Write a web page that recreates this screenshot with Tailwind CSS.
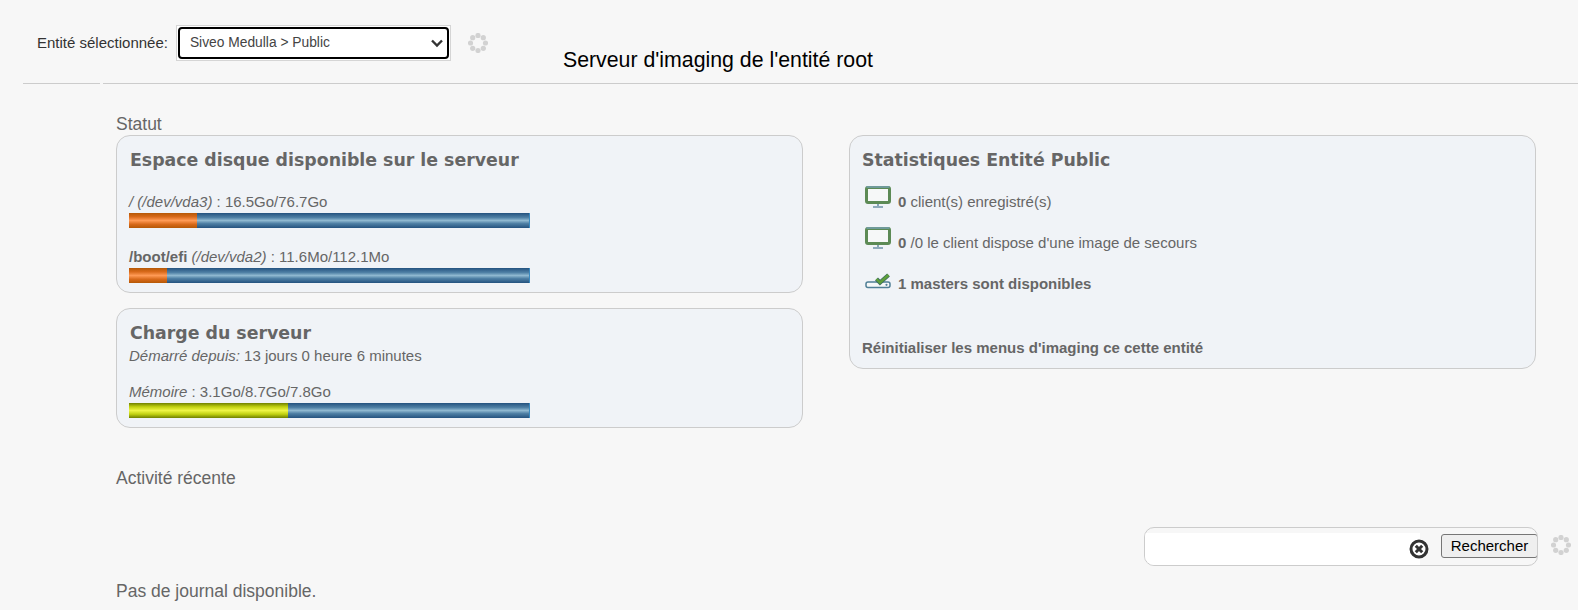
<!DOCTYPE html>
<html lang="fr">
<head>
    <meta charset="UTF-8">
    <title>Imaging</title>
    <script src="https://cdn.jsdelivr.net/npm/@tailwindcss/browser@4"></script>
</head>
<body class="bg-[#f7f7f7] h-[610px] overflow-hidden font-['Liberation_Sans',Arial,sans-serif] text-[#666]">

    <!-- entity selector + title -->
    <div class="flex h-[83px]">
        <div class="flex items-start pl-[37px] pt-[25px]">
            <label class="text-[15px] text-[#333] leading-[36px] mr-[8px]">Entité sélectionnée:</label>
            <div class="w-[275px] h-[36px] border border-[#d5d5d5] bg-white p-[1px]">
                <div class="h-full border-2 border-black rounded-[4px] flex items-center justify-between pl-[10px] pr-[3px]">
                    <span class="text-[13.8px] text-[#444]">Siveo Medulla &gt; Public</span>
                    <svg width="14" height="10" viewBox="0 0 14 10"><path d="M2 2.5 L7 7.5 L12 2.5" fill="none" stroke="#333" stroke-width="2.4"/></svg>
                </div>
            </div>
            <svg class="ml-[17px] mt-[8px]" width="20" height="20" viewBox="0 0 20 20" fill="#d2d2d2">
                <circle cx="10" cy="2.5" r="2.6"/><circle cx="15.3" cy="4.7" r="2.6"/><circle cx="17.5" cy="10" r="2.6"/><circle cx="15.3" cy="15.3" r="2.6"/><circle cx="10" cy="17.5" r="2.6"/><circle cx="4.7" cy="15.3" r="2.6"/><circle cx="2.5" cy="10" r="2.6"/><circle cx="4.7" cy="4.7" r="2.6"/>
            </svg>
        </div>
        <h1 class="ml-[75px] mt-[47px] text-[21.3px] leading-[26px] text-black">Serveur d'imaging de l'entité root</h1>
    </div>
    <div class="flex gap-[3px] pl-[23px]">
        <div class="w-[77px] border-t border-[#ccc]"></div>
        <div class="flex-1 border-t border-[#ccc]"></div>
    </div>

    <main class="pl-[116px]">
        <h2 class="text-[17.5px] leading-[18px] mt-[31px]">Statut</h2>
        <div class="flex gap-[46px] mt-[2px] items-start">
            <div class="w-[687px] flex flex-col gap-[15px]">
                <section class="h-[158px] rounded-[14px] border border-[#ccc] bg-[#f0f3f7] pl-[12px] pt-[12px]">
                    <h3 class="ml-[1px] font-['DejaVu_Sans'] font-bold text-[17.35px] leading-[24px]">Espace disque disponible sur le serveur</h3>
                    <p class="text-[15px] leading-[16px] mt-[22px]"><i>/ (/dev/vda3)</i> : 16.5Go/76.7Go</p>
                    <div class="w-[401px] h-[15px] flex mt-[3px]">
                        <div class="w-[68px] bg-[linear-gradient(#b55806,#d8691a_25%,#ff9a55_50%,#d8691a_75%,#b55806)]"></div>
                        <div class="flex-1 border-r border-[#3a8ac0] bg-[linear-gradient(#24527f,#4f80a5_30%,#8fb8d0_50%,#4f80a5_70%,#24527f)]"></div>
                    </div>
                    <p class="text-[15px] leading-[16px] mt-[21px]"><b>/boot/efi</b> <i>(/dev/vda2)</i> : 11.6Mo/112.1Mo</p>
                    <div class="w-[401px] h-[15px] flex mt-[3px]">
                        <div class="w-[38px] bg-[linear-gradient(#b55806,#d8691a_25%,#ff9a55_50%,#d8691a_75%,#b55806)]"></div>
                        <div class="flex-1 border-r border-[#3a8ac0] bg-[linear-gradient(#24527f,#4f80a5_30%,#8fb8d0_50%,#4f80a5_70%,#24527f)]"></div>
                    </div>
                </section>
                <section class="h-[120px] rounded-[14px] border border-[#ccc] bg-[#f0f3f7] pl-[12px] pt-[12px]">
                    <h3 class="ml-[1px] font-['DejaVu_Sans'] font-bold text-[17.35px] leading-[24px]">Charge du serveur</h3>
                    <p class="text-[15px] leading-[16px] mt-[3px]"><i>Démarré depuis:</i> 13 jours 0 heure 6 minutes</p>
                    <p class="text-[15px] leading-[16px] mt-[20px]"><i>Mémoire</i> : 3.1Go/8.7Go/7.8Go</p>
                    <div class="w-[401px] h-[15px] flex mt-[3px]">
                        <div class="w-[159px] bg-[linear-gradient(#6f7f00,#c0d010_25%,#eef545_50%,#c0d010_75%,#6f7f00)]"></div>
                        <div class="flex-1 border-r border-[#3a8ac0] bg-[linear-gradient(#24527f,#4f80a5_30%,#8fb8d0_50%,#4f80a5_70%,#24527f)]"></div>
                    </div>
                </section>
            </div>
            <section class="w-[687px] h-[234px] rounded-[14px] border border-[#ccc] bg-[#f0f3f7] pl-[12px] pt-[12px]">
                <h3 class="font-['DejaVu_Sans'] font-bold text-[17.35px] leading-[24px]">Statistiques Entité Public</h3>
                <div class="flex items-end mt-[9px] pl-[3px] h-[30px] text-[15px] leading-[16px]">
                    <svg width="26" height="22" viewBox="0 0 26 22" class="mb-[3px] mr-[7px]"><rect x="1.5" y="1.5" width="23" height="15" rx="1.5" fill="#f6f8f8" stroke="#5c8a55" stroke-width="3"/><path d="M1.5 1 H24.5" stroke="#6f9a9a" stroke-width="2"/><path d="M13 18 V20 M8 21 H18" stroke="#6d93a8" stroke-width="1.6"/></svg>
                    <p class="pb-[1px]"><b>0</b> client(s) enregistré(s)</p>
                </div>
                <div class="flex items-end mt-[11px] pl-[3px] h-[30px] text-[15px] leading-[16px]">
                    <svg width="26" height="22" viewBox="0 0 26 22" class="mb-[3px] mr-[7px]"><rect x="1.5" y="1.5" width="23" height="15" rx="1.5" fill="#f6f8f8" stroke="#5c8a55" stroke-width="3"/><path d="M1.5 1 H24.5" stroke="#6f9a9a" stroke-width="2"/><path d="M13 18 V20 M8 21 H18" stroke="#6d93a8" stroke-width="1.6"/></svg>
                    <p class="pb-[1px]"><b>0</b> /0 le client dispose d'une image de secours</p>
                </div>
                <div class="flex items-end mt-[11px] pl-[3px] h-[30px] text-[15px] leading-[16px]">
                    <svg width="26" height="16" viewBox="0 0 26 16" class="mb-[4px] mr-[7px]"><rect x="1" y="9" width="24" height="5.5" rx="2" fill="#f6f8f8" stroke="#4f7f96" stroke-width="1.5"/><circle cx="21.5" cy="11.8" r="1.1" fill="#4f7f96"/><path d="M11.5 6 L15 9.5 L23.5 2" fill="none" stroke="#3f6f5f" stroke-width="4.2"/><path d="M11.5 6 L15 9.5 L23.5 2" fill="none" stroke="#5fa03a" stroke-width="2.4"/></svg>
                    <p class="pb-[1px] font-bold">1 masters sont disponibles</p>
                </div>
                <p class="text-[15px] leading-[16px] font-bold mt-[47px]">Réinitialiser les menus d'imaging ce cette entité</p>
            </section>
        </div>

        <h2 class="text-[17.5px] leading-[18px] mt-[41px]">Activité récente</h2>

        <!-- search bar -->
        <div class="flex justify-end items-start mt-[40px]">
            <div class="w-[394px] h-[39px] rounded-[10px] border border-[#ccc] flex items-start overflow-hidden">
                <div class="w-[275px] h-[33px] mt-[5px] bg-white shrink-0"></div>
                <svg class="mt-[11px] -ml-[11px] shrink-0" width="20" height="20" viewBox="0 0 20 20"><circle cx="10" cy="10" r="8" fill="#fff" stroke="#333" stroke-width="3"/><path d="M6.8 6.8 L13.2 13.2 M13.2 6.8 L6.8 13.2" stroke="#333" stroke-width="3"/></svg>
                <button class="ml-[12px] mt-[6px] w-[97px] h-[24px] shrink-0 rounded-[3px] border border-[#767676] bg-[#efefef] text-[15px] text-black">Rechercher</button>
            </div>
            <svg class="ml-[13px] mr-[7px] mt-[8px]" width="20" height="20" viewBox="0 0 20 20" fill="#d2d2d2">
                <circle cx="10" cy="2.5" r="2.6"/><circle cx="15.3" cy="4.7" r="2.6"/><circle cx="17.5" cy="10" r="2.6"/><circle cx="15.3" cy="15.3" r="2.6"/><circle cx="10" cy="17.5" r="2.6"/><circle cx="4.7" cy="15.3" r="2.6"/><circle cx="2.5" cy="10" r="2.6"/><circle cx="4.7" cy="4.7" r="2.6"/>
            </svg>
        </div>

        <p class="text-[17.5px] leading-[18px] mt-[16px]">Pas de journal disponible.</p>
    </main>
</body>
</html>
